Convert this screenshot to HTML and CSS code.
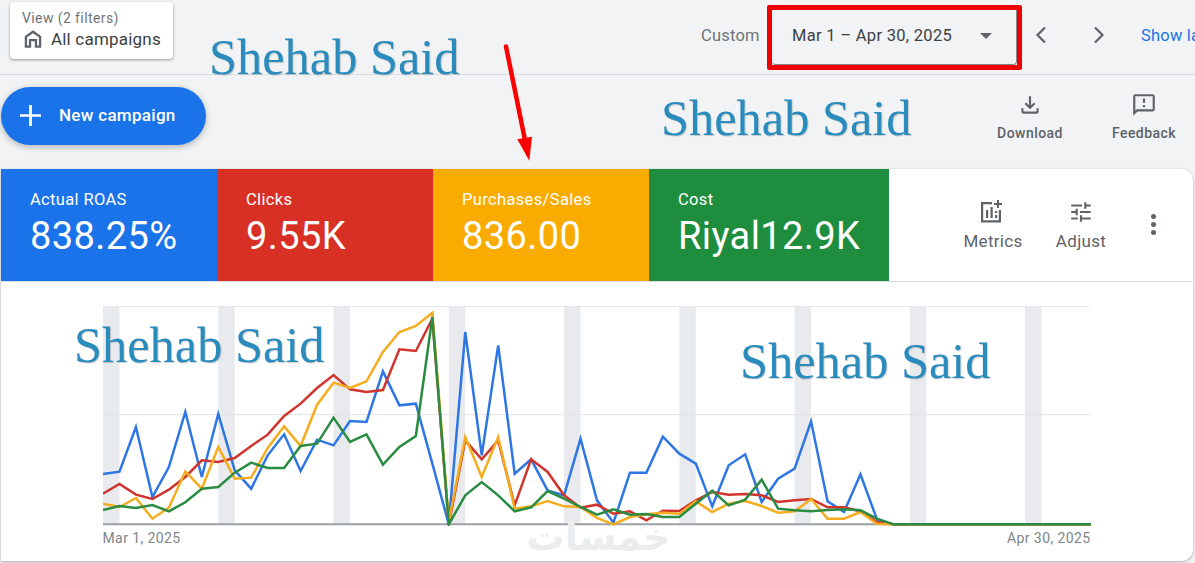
FILE: index.html
```html
<!DOCTYPE html>
<html>
<head>
  <link rel="stylesheet" href="styles.css">
</head>
<body>
  <div class="page">
    <!-- Top bar -->
    <div class="top-bar">
      <div class="view-card">
        <div class="view-label">View (2 filters)</div>
        <div class="view-name">
          <svg class="view-icon" viewBox="0 0 24 24"><path d="M12 2.500L3 9v12.500h7v-7h4v7h7V9l-9-6.500zm6.500 16.500h-2v-7h-9v7h-2v-8.800L12 5.600l6.500 4.600V19z"/></svg>
          <span>All campaigns</span>
        </div>
      </div>
      <span class="range-label">Custom</span>
      <div class="date-highlight">
        <div class="date-box">
          <span>Mar 1 – Apr 30, 2025</span>
          <span class="date-caret"></span>
        </div>
      </div>
      <svg class="chevron chevron-prev" viewBox="0 0 24 24"><polyline points="15,4.500 7.500,12 15,19.500"/></svg>
      <svg class="chevron chevron-next" viewBox="0 0 24 24"><polyline points="9,4.500 16.500,12 9,19.500"/></svg>
      <a class="show-link">Show last 30 days</a>
    </div>

    <!-- Toolbar -->
    <div class="toolbar">
      <button class="new-campaign">
        <svg class="plus-icon" viewBox="0 0 20 20"><path d="M8.700 0h2.600v8.700H20v2.600h-8.700V20H8.700v-8.700H0V8.700h8.700z"/></svg>
        <span>New campaign</span>
      </button>
      <div class="tool download">
        <svg viewBox="0 0 24 24"><path d="M18 15v3H6v-3H4v3c0 1.100.9 2 2 2h12c1.100 0 2-.9 2-2v-3h-2zm-1-4l-1.410-1.410L13 12.170V4h-2v8.170L8.410 9.590 7 11l5 5 5-5z"/></svg>
        <span>Download</span>
      </div>
      <div class="tool feedback">
        <svg viewBox="0 0 24 24"><path d="M20 2H4c-1.100 0-2 .9-2 2v18l4-4h14c1.100 0 2-.9 2-2V4c0-1.100-.9-2-2-2zm0 14H5.170L4 17.170V4h16v12zM11 12h2v2h-2zm0-6h2v4h-2z"/></svg>
        <span>Feedback</span>
      </div>
    </div>

    <!-- Metrics card -->
    <div class="card">
      <div class="metric-row">
        <div class="metric metric-blue">
          <div class="metric-name">Actual ROAS</div>
          <div class="metric-value">838.25%</div>
        </div>
        <div class="metric metric-red">
          <div class="metric-name">Clicks</div>
          <div class="metric-value">9.55K</div>
        </div>
        <div class="metric metric-yellow">
          <div class="metric-name">Purchases/Sales</div>
          <div class="metric-value">836.00</div>
        </div>
        <div class="metric metric-green">
          <div class="metric-name">Cost</div>
          <div class="metric-value">Riyal12.9K</div>
        </div>
        <div class="card-actions">
          <div class="action action-metrics">
            <svg viewBox="0 0 26 24"><path d="M22 3h-3V0h-2v3h-3v2h3v3h2V5h3V3zM1 2v20.500h20V10h-2.200v10.300H3.200V4.200H12V2H1zm5 8h2.200v8H6v-8zm4.500-3h2.200v11h-2.200V7zm4.500 8h2.200v3H15v-3zm0-4h2.200v2H15v-2z"/></svg>
            <span>Metrics</span>
          </div>
          <div class="action action-adjust">
            <svg viewBox="0 0 24 24"><path d="M3 17v2h6v-2H3zM3 5v2h10V5H3zm10 16v-2h8v-2h-8v-2h-2v6h2zM7 9v2H3v2h4v2h2V9H7zm14 4v-2H11v2h10zm-6-4h2V7h4V5h-4V3h-2v6z"/></svg>
            <span>Adjust</span>
          </div>
          <div class="more-dots"><i></i><i></i><i></i></div>
        </div>
      </div>

      <div class="chart">
        <!-- x is the day index (0-60), y is a 3x pixel scale -->
        <svg class="chart-plot" viewBox="0 32 60 660" preserveAspectRatio="none">
          <g class="weekends">
            <rect x="0" y="32" width="1" height="655"/>
            <rect x="7" y="32" width="1" height="655"/>
            <rect x="14" y="32" width="1" height="655"/>
            <rect x="21" y="32" width="1" height="655"/>
            <rect x="28" y="32" width="1" height="655"/>
            <rect x="35" y="32" width="1" height="655"/>
            <rect x="42" y="32" width="1" height="655"/>
            <rect x="49" y="32" width="1" height="655"/>
            <rect x="56" y="32" width="1" height="655"/>
          </g>
          <line class="grid-line" x1="0" y1="33" x2="60" y2="33"/>
          <line class="grid-line" x1="0" y1="358" x2="60" y2="358"/>
          <line class="axis-line" x1="0" y1="687" x2="60" y2="687"/>
          <polyline class="series series-blue" points="0,536 1,529 2,395 3,605 4,515 5,350 6,545 7,356 8,525 9,580 10,480 11,417 12,527 13,433 14,450 15,377 16,380 17,228 18,330 19,325 20,505 21,687 22,110 23,480 24,150 25,535 26,492 27,585 28,600 29,430 30,615 31,682 32,532 33,532 34,424 35,475 36,505 37,633 38,510 39,477 40,620 41,550 42,520 43,378 44,618 45,650 46,537 47,672 48,687 60,687"/>
          <polyline class="series series-red" points="0,595 1,566 2,598 3,611 4,583 5,545 6,495 7,500 8,488 9,452 10,418 11,362 12,325 13,278 14,239 15,282 16,290 17,284 18,162 19,167 20,70 21,687 22,435 23,492 24,435 25,630 26,492 27,530 28,600 29,637 30,628 31,655 32,648 33,675 34,646 35,647 36,615 37,590 38,598 39,596 40,600 41,620 42,615 43,611 44,636 45,636 46,648 47,680 48,687 60,687"/>
          <polyline class="series series-yellow" points="0,625 1,635 2,608 3,670 4,637 5,528 6,580 7,455 8,550 9,547 10,458 11,393 12,452 13,328 14,262 15,278 16,258 17,170 18,110 19,92 20,52 21,680 22,425 23,545 24,425 25,640 26,633 27,617 28,633 29,635 30,668 31,687 32,665 33,657 34,652 35,655 36,618 37,650 38,625 39,617 40,632 41,652 42,648 43,611 44,670 45,670 46,650 47,685 48,687 60,687"/>
          <polyline class="series series-green" points="0,644 1,632 2,638 3,629 4,648 5,621 6,580 7,575 8,532 9,502 10,518 11,518 12,452 13,445 14,367 15,440 16,417 17,508 18,455 19,422 20,65 21,687 22,600 23,560 24,600 25,648 26,636 27,587 28,610 29,635 30,658 31,642 32,658 33,656 34,665 35,665 36,625 37,586 38,630 39,613 40,553 41,640 42,645 43,648 44,644 45,642 46,645 47,670 48,687 60,687"/>
        </svg>
        <div class="chart-dates">
          <span>Mar 1, 2025</span>
          <span>Apr 30, 2025</span>
        </div>
      </div>
    </div>

    <!-- Overlays on the screenshot -->
    <svg class="red-arrow" viewBox="0 0 40 120">
      <line x1="7" y1="3.500" x2="26" y2="97"/>
      <polygon points="18.300,96.300 33,93.700 30.300,117.700"/>
    </svg>
    <div class="stamp stamp-1">Shehab Said</div>
    <div class="stamp stamp-2">Shehab Said</div>
    <div class="stamp stamp-3">Shehab Said</div>
    <div class="stamp stamp-4">Shehab Said</div>
    <div class="site-mark">خمسات</div>
  </div>
</body>
</html>
```

FILE: styles.css
```css
* {
  margin: 0;
  padding: 0;
  box-sizing: border-box;
}

html, body {
  height: 100%;
  overflow: hidden;
}

body {
  background: #f1f3f4;
  font-family: Roboto, "Liberation Sans", sans-serif;
  color: #5f6368;
}

.page {
  position: relative;
  width: 1195px;
  height: 563px;
  overflow: hidden;
}

/* Top bar */
.top-bar {
  display: flex;
  height: 75px;
  border-bottom: 1px solid #dadce0;
  overflow: hidden;
}

.view-card {
  flex-shrink: 0;
  width: 163px;
  height: 57px;
  margin: 2px 0 0 10px;
  padding: 9px 12px;
  background: #fff;
  border-radius: 4px;
  box-shadow: 0 1px 3px rgba(60, 64, 67, 0.5);
}

.view-label {
  font-size: 14px;
  line-height: 15px;
  letter-spacing: 0.4px;
  color: #70757a;
}

.view-name {
  display: flex;
  align-items: center;
  gap: 7px;
  margin-top: 2px;
  font-size: 17px;
  line-height: 20px;
  letter-spacing: 0.2px;
  color: #3c4043;
}

.view-icon {
  width: 22px;
  height: 22px;
  fill: #5f6368;
}

.range-label {
  flex-shrink: 0;
  width: 61px;
  margin: 26px 5px 0 528px;
  font-size: 16.500px;
  line-height: 20px;
  letter-spacing: 0.2px;
  white-space: nowrap;
  color: #70757a;
}

.date-highlight {
  flex-shrink: 0;
  width: 255px;
  height: 65px;
  margin-top: 5px;
  border: 5px solid #f00000;
  border-radius: 2px;
}

.date-box {
  display: flex;
  align-items: center;
  justify-content: space-between;
  height: 100%;
  padding: 0 24px 3px 20px;
  border-right: 1px solid #80868b;
  border-bottom: 1px solid #80868b;
  border-radius: 0 0 4px 4px;
  font-size: 16.500px;
  letter-spacing: 0.3px;
  color: #3c4043;
}

.date-caret {
  width: 0;
  height: 0;
  border-left: 6px solid transparent;
  border-right: 6px solid transparent;
  border-top: 6px solid #5f6368;
}

.chevron {
  flex-shrink: 0;
  width: 24px;
  height: 24px;
  margin-top: 23px;
  fill: none;
  stroke: #5f6368;
  stroke-width: 2.200;
}

.chevron-prev {
  margin-left: 8px;
}

.chevron-next {
  margin-left: 32px;
}

.show-link {
  flex-shrink: 0;
  margin: 26px 0 0 31px;
  font-size: 16.500px;
  line-height: 20px;
  letter-spacing: 0.2px;
  color: #1a73e8;
  white-space: nowrap;
}

/* Toolbar */
.toolbar {
  display: flex;
  height: 94px;
}

.new-campaign {
  display: flex;
  align-items: center;
  gap: 18px;
  width: 205px;
  height: 58px;
  margin: 12px 0 0 1px;
  padding: 0 0 2px 19px;
  background: #1a73e8;
  border: none;
  border-radius: 29px;
  box-shadow: 0 2px 6px rgba(60, 64, 67, 0.35);
  font-family: inherit;
  font-size: 17px;
  font-weight: 500;
  letter-spacing: 0.3px;
  color: #fff;
}

.plus-icon {
  width: 21px;
  height: 21px;
  fill: #fff;
}

.tool {
  display: flex;
  flex-direction: column;
  align-items: center;
  flex-shrink: 0;
  width: 90px;
  margin-top: 17px;
  font-size: 14px;
  font-weight: 500;
  letter-spacing: 0.45px;
}

.tool svg {
  width: 26px;
  height: 26px;
  margin-bottom: 7px;
  fill: #5f6368;
}

.download {
  margin-left: 779px;
}

.feedback {
  margin-left: 24px;
}

/* Metrics card */
.card {
  width: 1192px;
  height: 392px;
  margin-left: 1px;
  background: #fff;
  border-radius: 0 12px 12px 0;
  box-shadow: 0 1px 3px rgba(60, 64, 67, 0.4);
}

.metric-row {
  display: flex;
  height: 113px;
  border-bottom: 1px solid #dadce0;
}

.metric {
  width: 216px;
  height: 112px;
  padding: 22px 0 0 29px;
  color: #fff;
}

.metric-blue {
  background: #1a73e8;
}

.metric-red {
  background: #d93025;
}

.metric-yellow {
  background: #f9ab00;
}

.metric-green {
  width: 240px;
  background: #1e8e3e;
}

.metric-name {
  font-size: 16.500px;
  line-height: 18px;
  letter-spacing: 0.35px;
}

.metric-value {
  margin-top: 5px;
  font-size: 38px;
  line-height: 44px;
  letter-spacing: 0.4px;
}

.card-actions {
  display: flex;
  flex: 1;
}

.action {
  display: flex;
  flex-direction: column;
  align-items: center;
  flex-shrink: 0;
  width: 80px;
  margin-top: 30px;
  font-size: 17px;
  letter-spacing: 0.3px;
}

.action svg {
  width: 26px;
  height: 26px;
  margin-bottom: 6px;
  fill: #5f6368;
}

.action-metrics {
  margin-left: 64px;
}

.action-adjust {
  margin-left: 8px;
}

.more-dots {
  display: flex;
  flex-direction: column;
  gap: 3px;
  margin: 45px 0 0 30px;
}

.more-dots i {
  display: block;
  width: 5px;
  height: 5px;
  border-radius: 50%;
  background: #5f6368;
}

/* Chart */
.chart {
  width: 988px;
  margin: 23.700px 0 0 101.500px;
}

.chart-plot {
  display: block;
  width: 988px;
  height: 220px;
}

.weekends rect {
  fill: #e8eaed;
}

.grid-line {
  stroke: #e3e4e6;
  stroke-width: 1;
  vector-effect: non-scaling-stroke;
}

.axis-line {
  stroke: #9aa0a6;
  stroke-width: 2;
  vector-effect: non-scaling-stroke;
}

.series {
  fill: none;
  stroke-width: 2.500;
  stroke-linejoin: miter;
  vector-effect: non-scaling-stroke;
}

.series-blue {
  stroke: #2d76e4;
}

.series-red {
  stroke: #d0342c;
}

.series-yellow {
  stroke: #f5ac1e;
}

.series-green {
  stroke: #2a8c42;
}

.chart-dates {
  display: flex;
  justify-content: space-between;
  margin-top: 4px;
  font-size: 14px;
  line-height: 16px;
  letter-spacing: 0.4px;
  color: #80868b;
}

/* Overlays */
.red-arrow {
  position: absolute;
  left: 499px;
  top: 43px;
  width: 40px;
  height: 120px;
}

.red-arrow line {
  stroke: #fa0000;
  stroke-width: 4.500;
  stroke-linecap: round;
}

.red-arrow polygon {
  fill: #fa0000;
}

.stamp {
  position: absolute;
  font-family: "Liberation Serif", serif;
  font-size: 50.400px;
  line-height: 56px;
  white-space: nowrap;
  color: #2a8bbd;
  text-shadow: 1px 1px 1px rgba(120, 120, 120, 0.35);
}

.stamp-1 {
  left: 209px;
  top: 29px;
}

.stamp-2 {
  left: 661px;
  top: 90px;
}

.stamp-3 {
  left: 74px;
  top: 317px;
}

.stamp-4 {
  left: 740px;
  top: 333px;
}

.site-mark {
  position: absolute;
  left: 517px;
  top: 512px;
  width: 163px;
  font-family: "DejaVu Sans", sans-serif;
  font-size: 38px;
  font-weight: bold;
  line-height: 50px;
  text-align: center;
  color: #ebecec;
}
```
